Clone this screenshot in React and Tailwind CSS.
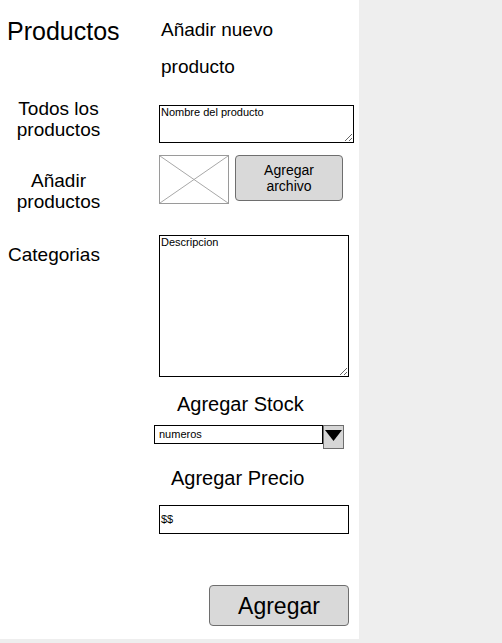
import React from 'react';

const font = { fontFamily: '"Liberation Sans", Arial, sans-serif' };

function SideMenu() {
  return (
    <div className="w-[117px] flex flex-col text-black">
      <h1 className="mt-[17px] pl-[7px] text-[25px] leading-[29px]">Productos</h1>
      <a className="mt-[52px] text-center text-[19px] leading-[21px]">
        Todos los
        <br />
        productos
      </a>
      <a className="mt-[30px] text-center text-[19px] leading-[21px]">
        Añadir
        <br />
        productos
      </a>
      <a className="mt-[32px] pl-[8px] text-[19px] leading-[21px]">Categorias</a>
    </div>
  );
}

function ImagePlaceholder() {
  return (
    <div className="ml-[5px] w-[70px] h-[49px] border border-[#9a9a9a] bg-white">
      <svg width="100%" height="100%" viewBox="0 0 68 47" preserveAspectRatio="none">
        <line x1="0" y1="0" x2="68" y2="47" stroke="#a8a8a8" strokeWidth="1" />
        <line x1="68" y1="0" x2="0" y2="47" stroke="#a8a8a8" strokeWidth="1" />
      </svg>
    </div>
  );
}

function NewProductForm() {
  return (
    <div className="ml-[37px] w-[200px] flex flex-col text-black">
      <h2 className="mt-[11px] pl-[7px] text-[19px] leading-[37px]">
        Añadir nuevo
        <br />
        producto
      </h2>

      <textarea
        defaultValue="Nombre del producto"
        className="mt-[20px] ml-[5px] w-[195px] h-[38px] border border-black px-[1px] py-0 text-[11px] leading-[13px] text-black outline-none"
        style={font}
      />

      <div className="mt-[12px] flex items-start">
        <ImagePlaceholder />
        <button className="ml-[6px] w-[108px] h-[46px] rounded-[4px] border border-[#6e6e6e] bg-[#d9d9d9] text-[14px] leading-[16px] text-black">
          Agregar
          <br />
          archivo
        </button>
      </div>

      <textarea
        defaultValue="Descripcion"
        className="mt-[31px] ml-[5px] w-[190px] h-[142px] border border-black px-[1px] py-0 text-[11px] leading-[13px] text-black outline-none"
        style={font}
      />

      <h3 className="mt-[16px] ml-[23px] text-[20px] leading-[23px]">Agregar Stock</h3>

      <div className="mt-[9px] flex items-start">
        <div className="w-[169px] h-[19px] border border-black pl-[4px] text-[11px] leading-[17px]">numeros</div>
        <div className="w-[21px] h-[24px] border border-[#6e6e6e] bg-[#d6d6d6] flex justify-center pt-[4px]">
          <svg width="17" height="11" viewBox="0 0 17 11">
            <polygon points="0,0 17,0 8.5,11" fill="#000" />
          </svg>
        </div>
      </div>

      <h3 className="mt-[18px] ml-[17px] text-[20px] leading-[23px]">Agregar Precio</h3>

      <div className="mt-[15px] ml-[5px] w-[190px] h-[29px] border border-black flex items-center pl-[1px] text-[11px]">
        $$
      </div>

      <button className="mt-[51px] ml-[55px] w-[140px] h-[41px] rounded-[4px] border border-[#6e6e6e] bg-[#d9d9d9] text-[23px] leading-[26px] text-black">
        Agregar
      </button>
    </div>
  );
}

export default function App() {
  return (
    <div className="min-h-screen bg-[#eeeeee]" style={font}>
      <div className="w-[359px] h-[639px] bg-white flex">
        <SideMenu />
        <NewProductForm />
      </div>
    </div>
  );
}
